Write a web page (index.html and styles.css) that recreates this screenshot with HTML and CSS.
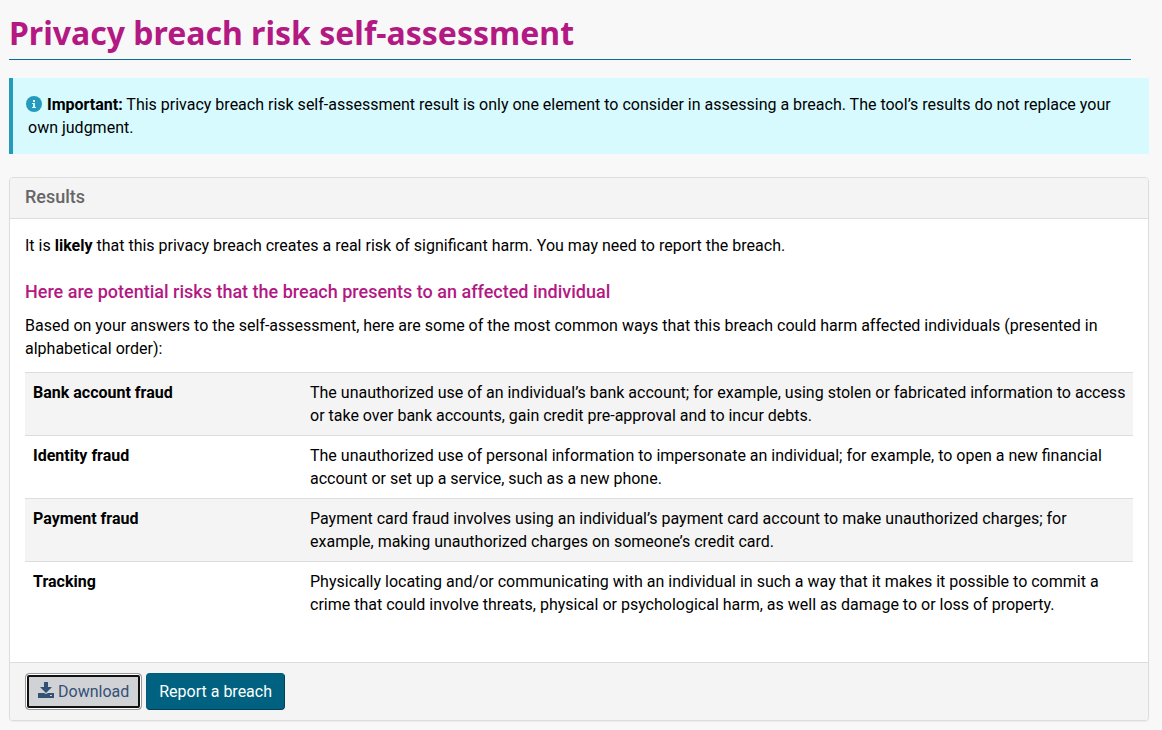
FILE: index.html
```
<!DOCTYPE html>
<html lang="en">
<head>
    <meta charset="UTF-8">
    <meta name="viewport" content="width=device-width, initial-scale=1.0">
    <title>Privacy breach risk self-assessment</title>
    <link rel="stylesheet" href="styles.css">
</head>
<body>
    <main class="container">
        <h1>Privacy breach risk self-assessment</h1>

        <!-- Notice -->
        <div class="alert">
            <p><svg class="info-icon" viewBox="0 0 16 16" aria-hidden="true"><circle cx="8" cy="8" r="8" fill="#269abc"/><path d="M7 4h2v2H7zM6 7h3v4h1v1H6v-1h1V8H6z" fill="#d7faff"/></svg><strong>Important:</strong> This privacy breach risk self-assessment result is only one element to consider in assessing a breach. The tool’s results do not replace your own judgment.</p>
        </div>

        <!-- Results -->
        <section class="panel">
            <header class="panel-heading">
                <h2>Results</h2>
            </header>
            <div class="panel-body">
                <p>It is <strong>likely</strong> that this privacy breach creates a real risk of significant harm. You may need to report the breach.</p>
                <h3>Here are potential risks that the breach presents to an affected individual</h3>
                <p>Based on your answers to the self-assessment, here are some of the most common ways that this breach could harm affected individuals (presented in alphabetical order):</p>
                <table class="risks">
                    <tbody>
                        <tr>
                            <th scope="row">Bank account fraud</th>
                            <td>The unauthorized use of an individual’s bank account; for example, using stolen or fabricated information to access or take over bank accounts, gain credit pre-approval and to incur debts.</td>
                        </tr>
                        <tr>
                            <th scope="row">Identity fraud</th>
                            <td>The unauthorized use of personal information to impersonate an individual; for example, to open a new financial account or set up a service, such as a new phone.</td>
                        </tr>
                        <tr>
                            <th scope="row">Payment fraud</th>
                            <td>Payment card fraud involves using an individual’s payment card account to make unauthorized charges; for example, making unauthorized charges on someone’s credit card.</td>
                        </tr>
                        <tr>
                            <th scope="row">Tracking</th>
                            <td>Physically locating and/or communicating with an individual in such a way that it makes it possible to commit a crime that could involve threats, physical or psychological harm, as well as damage to or loss of property.</td>
                        </tr>
                    </tbody>
                </table>
            </div>
            <footer class="panel-footer">
                <button type="button" class="btn btn-default"><svg class="download-icon" viewBox="0 0 16 16" aria-hidden="true"><path d="M6 0h4v5h4l-6 6-6-6h4z" fill="#335075"/><path d="M0 11h6l2 1 2-1h6v5H0zM12 13v1h2v-1z" fill="#335075" fill-rule="evenodd"/></svg>Download</button>
                <button type="button" class="btn btn-primary">Report a breach</button>
            </footer>
        </section>
    </main>
</body>
</html>
```
FILE: styles.css
```
* {
    box-sizing: border-box;
}
body {
    margin: 0;
    background: #f8f8f8;
    color: #000;
    font-family: Roboto, Arial, sans-serif;
    font-size: 16px;
    line-height: 23px;
}
.container {
    padding: 10px 13px 9px 9px;
}
h1 {
    margin: 0 18px 18px 0;
    padding-bottom: 4px;
    border-bottom: 1px solid #0a6e93;
    color: #b31983;
    font-family: "Noto Sans", sans-serif;
    font-size: 32px;
    font-weight: 700;
    line-height: 45px;
}
p {
    margin: 0;
}
strong {
    font-weight: 700;
}
.alert {
    margin-bottom: 23px;
    padding: 15px;
    border-left: 4px solid #269abc;
    background: #d7faff;
}
.info-icon {
    width: 16px;
    height: 16px;
    margin: 0 5px 0 -2px;
    vertical-align: -2px;
}

/* Results panel */
.panel {
    border: 1px solid #ddd;
    border-radius: 4px;
    background: #fff;
    box-shadow: 0 1px 1px rgba(0, 0, 0, 0.05);
}
.panel-heading {
    padding: 7px 15px 10px;
    border-bottom: 1px solid #ddd;
    border-radius: 3px 3px 0 0;
    background: #f4f4f4;
}
h2, h3 {
    margin: 0;
    font-size: 18px;
    font-weight: 500;
}
h2 {
    color: #666;
}
h3 {
    margin: 23px 0 11px;
    color: #b31983;
}
.panel-body {
    padding: 15px 15px 38px;
}
.risks {
    width: 100%;
    margin-top: 12px;
    border-collapse: collapse;
    table-layout: fixed;
}
.risks th, .risks td {
    padding: 8px 6px 8px 8px;
    border-top: 1px solid #ddd;
    text-align: left;
    vertical-align: top;
}
.risks th {
    width: 25%;
    font-weight: 700;
}
.risks tr:nth-child(odd) {
    background: #f4f4f4;
}
.panel-footer {
    display: flex;
    gap: 4px;
    padding: 10px 15px;
    border-top: 1px solid #ddd;
    border-radius: 0 0 3px 3px;
    background: #f4f4f4;
}

/* Buttons */
.btn {
    padding: 6px 12px;
    border: 1px solid #bbbfc5;
    border-radius: 4px;
    font: inherit;
}
.btn-default {
    border-color: #999;
    background: #d0d2d6;
    color: #335075;
    box-shadow: inset 0 0 0 1px #fff, inset 0 0 0 3px #101010;
}
.btn-primary {
    border-color: #005c7a #004156 #004156 #005c7a;
    background: #006280;
    color: #fff;
}
.download-icon {
    width: 16px;
    height: 16px;
    margin-right: 4px;
    vertical-align: -1px;
}
```
